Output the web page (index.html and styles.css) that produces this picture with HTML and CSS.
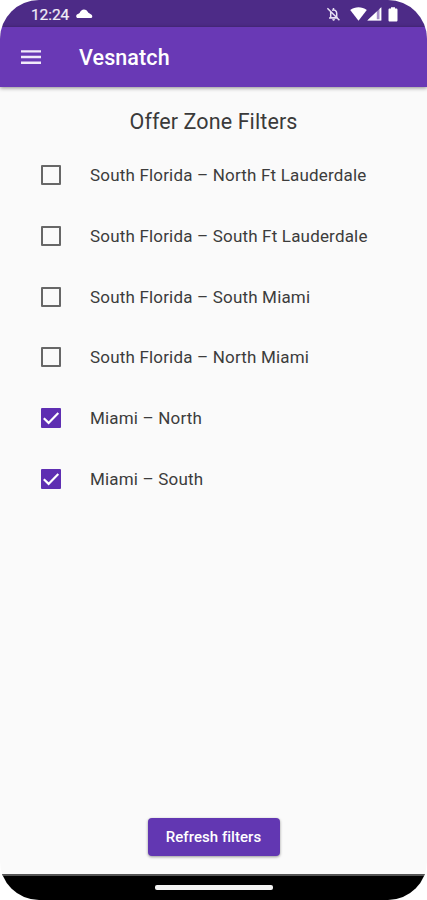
FILE: index.html
```html
<!DOCTYPE html>
<html lang="en">
<head>
<meta charset="utf-8">
<title>Vesnatch</title>
<link rel="stylesheet" href="styles.css">
</head>
<body>
<div class="phone">
  <div class="status">
    <span class="time">12:24</span>
    <svg class="cloud" width="17" height="10" viewBox="0 0 17 10"><path d="M2 9.1C.9 9.1.2 8.4.2 7.3c0-1 .7-1.9 1.8-2.2L3.6 4C4.6 1.6 6 .4 7.9.4c2 0 3.4 1.1 4.2 3.2l2.3 1.3c1.2.6 1.9 1.5 1.9 2.5 0 1.1-.8 1.7-2 1.7z"/></svg>
    <svg class="bell" width="15" height="16" viewBox="0 0 15 16"><path class="line" d="M4.7 5.8v6h6V7.2A3.2 3.2 0 0 0 6 4.3M3 12h9M1.4 2.3l12 12M7.5 2v1.7"/><path d="M6.2 13.3h2.8a1.4 1.4 0 0 1-2.8 0z"/></svg>
    <svg class="wifi" width="17" height="14" viewBox="0 0 17 14"><path d="M.2 3.1C5.2-.7 11.8-.7 16.8 3.1L8.5 13.7Z"/></svg>
    <svg class="signal" width="15" height="14" viewBox="0 0 15 14"><path class="dim" d="M.3 13.6 14.3.2v13.4z"/><path d="M.3 13.6 9.8 4.5v9.1zM12.5 1.9 14.3.2v13.4H.3l1.5-1.4h10.7z"/></svg>
    <svg class="battery" width="10" height="15" viewBox="0 0 10 15"><path d="M3 .2h4v1.4h1.3c.7 0 1.2.5 1.2 1.2v10.4c0 .8-.5 1.3-1.2 1.3H1.7c-.7 0-1.2-.5-1.2-1.3V2.8c0-.7.5-1.2 1.2-1.2H3z"/></svg>
  </div>
  <header class="bar">
    <svg class="menu" width="20" height="15" viewBox="0 0 20 15"><path d="M0 .2h20v2.4H0zM0 5.8h20v2.4H0zM0 11.6h20V14H0z"/></svg>
    <h1>Vesnatch</h1>
  </header>
  <main>
    <h2>Offer Zone Filters</h2>
    <ul>
      <li><i class="box"></i><span>South Florida – North Ft Lauderdale</span></li>
      <li><i class="box"></i><span>South Florida – South Ft Lauderdale</span></li>
      <li><i class="box"></i><span>South Florida – South Miami</span></li>
      <li><i class="box"></i><span>South Florida – North Miami</span></li>
      <li><i class="box on"><svg width="20" height="20" viewBox="0 0 20 20"><path d="M2.8 10.2l4.8 4.7L17.3 5"/></svg></i><span>Miami – North</span></li>
      <li><i class="box on"><svg width="20" height="20" viewBox="0 0 20 20"><path d="M2.8 10.2l4.8 4.7L17.3 5"/></svg></i><span>Miami – South</span></li>
    </ul>
    <button type="button">Refresh filters</button>
  </main>
  <footer class="nav"><i></i></footer>
</div>
</body>
</html>
```
FILE: styles.css
```css
* { box-sizing: border-box; }
body { margin: 0; background: #fff; font-family: Roboto, sans-serif; }
.phone {
  width: 427px; height: 900px;
  display: flex; flex-direction: column;
  border-radius: 39px; overflow: hidden;
  background: #fafafa;
}
.status {
  height: 27px; flex: none;
  display: flex; align-items: flex-start;
  padding-left: 31px;
  background: #4d2b87; color: #f2eef8;
}
.status svg { fill: #fff; flex: none; }
.time { width: 45px; font-size: 15.5px; line-height: 18px; margin-top: 6px; letter-spacing: -.1px; -webkit-text-stroke: .2px; }
.cloud { margin-top: 9px; }
.bell { margin: 6px 0 0 233px; }
.bell .line { fill: none; stroke: #e8e0f3; stroke-width: 1.5; }
.wifi { margin: 7px 0 0 9px; }
.signal { margin: 7px 0 0 0; }
.signal .dim { fill: #a58fc6; }
.battery { margin: 7px 0 0 6px; }
.bar {
  height: 60px; flex: none;
  display: flex; align-items: center;
  padding: 1px 0 0 21px;
  background: #6939b5; color: #fff;
  box-shadow: 0 1px 4px rgba(0,0,0,.45);
  z-index: 1;
}
.menu { fill: #f1eafa; }
h1 { margin: 1px 0 0 38px; font-size: 21.5px; line-height: 28px; font-weight: 500; letter-spacing: .1px; }
main { flex: 1; display: flex; flex-direction: column; align-items: center; }
h2 { margin: 20px 0 0; height: 30px; font-size: 21.5px; line-height: 30px; font-weight: 400; letter-spacing: .1px; color: #3a3a3a; }
ul { list-style: none; margin: 7.6px 0 0; padding: 0; width: 100%; }
li { height: 60.8px; display: flex; align-items: center; padding-left: 41px; font-size: 17px; letter-spacing: .18px; color: #3c3c3c; white-space: nowrap; }
.box { width: 20px; height: 20px; margin-right: 29px; border: 2px solid #676767; border-radius: 1px; flex: none; }
.on { background: #5e2eb2; border: 0; }
.on svg { display: block; fill: none; stroke: #fff; stroke-width: 2.2; }
button {
  width: 132px; height: 38px; margin: auto 0 18px; padding: 0;
  border: 0; border-radius: 4px;
  background: #6237b2; color: #fff;
  font: 500 15px/38px Roboto, sans-serif;
  letter-spacing: .05px;
  box-shadow: 0 1px 3px rgba(0,0,0,.4);
}
.nav {
  height: 26px; flex: none;
  display: flex; justify-content: center;
  border-top: 2px solid #555; background: #000;
}
.nav i { width: 118px; height: 5px; margin-top: 9px; border-radius: 2px; background: #f4f4f4; }
```
